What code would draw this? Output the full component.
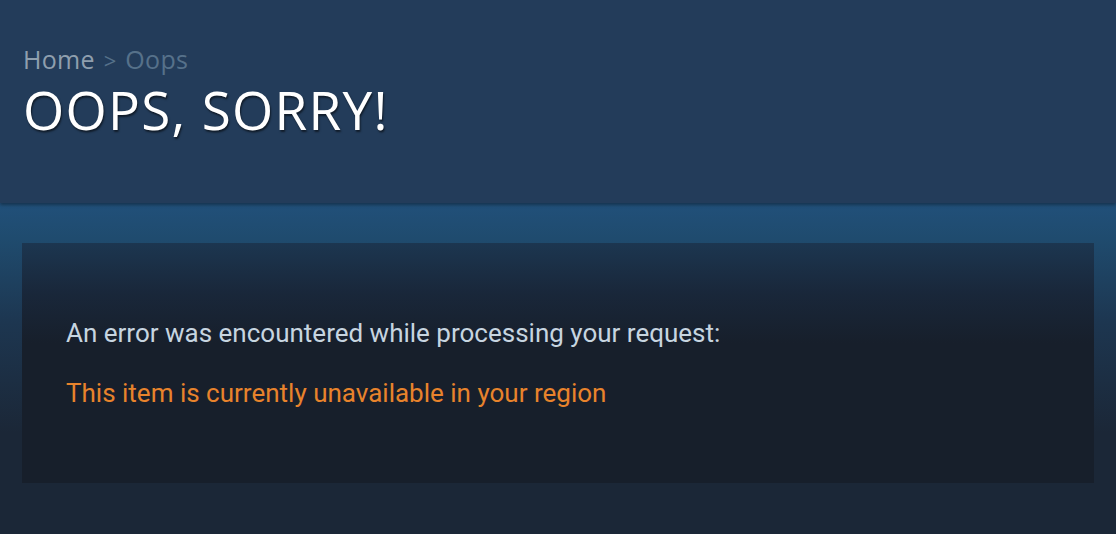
import React from 'react';

const ErrorPage: React.FC = () => {
    return (
        <div className="w-[1116px] h-[534px] overflow-hidden bg-[#1b2737]">
            {/* page header */}
            <div className="h-[203px] bg-[#233c5a] px-[23px] pt-[43px] shadow-[0_2px_3px_rgba(0,0,0,0.35)] relative z-10 font-['Open_Sans',sans-serif]">
                <div className="text-[25px] leading-[32px] text-[#8f9fae] tracking-[0.3px]">
                    Home <span className="text-[#56718a] text-[22px] mx-[2px]">&gt;</span> <span className="text-[#56718a]">Oops</span>
                </div>
                <h1 className="mt-[2px] text-[53px] leading-[64px] text-white tracking-[1.3px] [text-shadow:1px_2px_2px_rgba(0,0,0,0.55)]">
                    OOPS, SORRY!
                </h1>
            </div>

            {/* content area */}
            <div className="h-[331px] bg-[linear-gradient(to_bottom,#21507a_0px,#1f4b6e_36px,#1d3650_120px,#1b2737_230px)] px-[22px] pt-[40px]">
                <div className="w-[1072px] h-[240px] bg-[linear-gradient(to_bottom,#1c3650_0px,#19273a_50px,#171f2b_100px,#171f2b_100%)] px-[44px] pt-[75px] font-['Roboto',sans-serif]">
                    <p className="text-[26px] leading-[30px] text-[#c7d5e0]">
                        An error was encountered while processing your request:
                    </p>
                    <p className="mt-[30px] text-[26px] leading-[30px] text-[#e8832c]">
                        This item is currently unavailable in your region
                    </p>
                </div>
            </div>
        </div>
    );
};

export default function App() {
    return <ErrorPage />;
}
